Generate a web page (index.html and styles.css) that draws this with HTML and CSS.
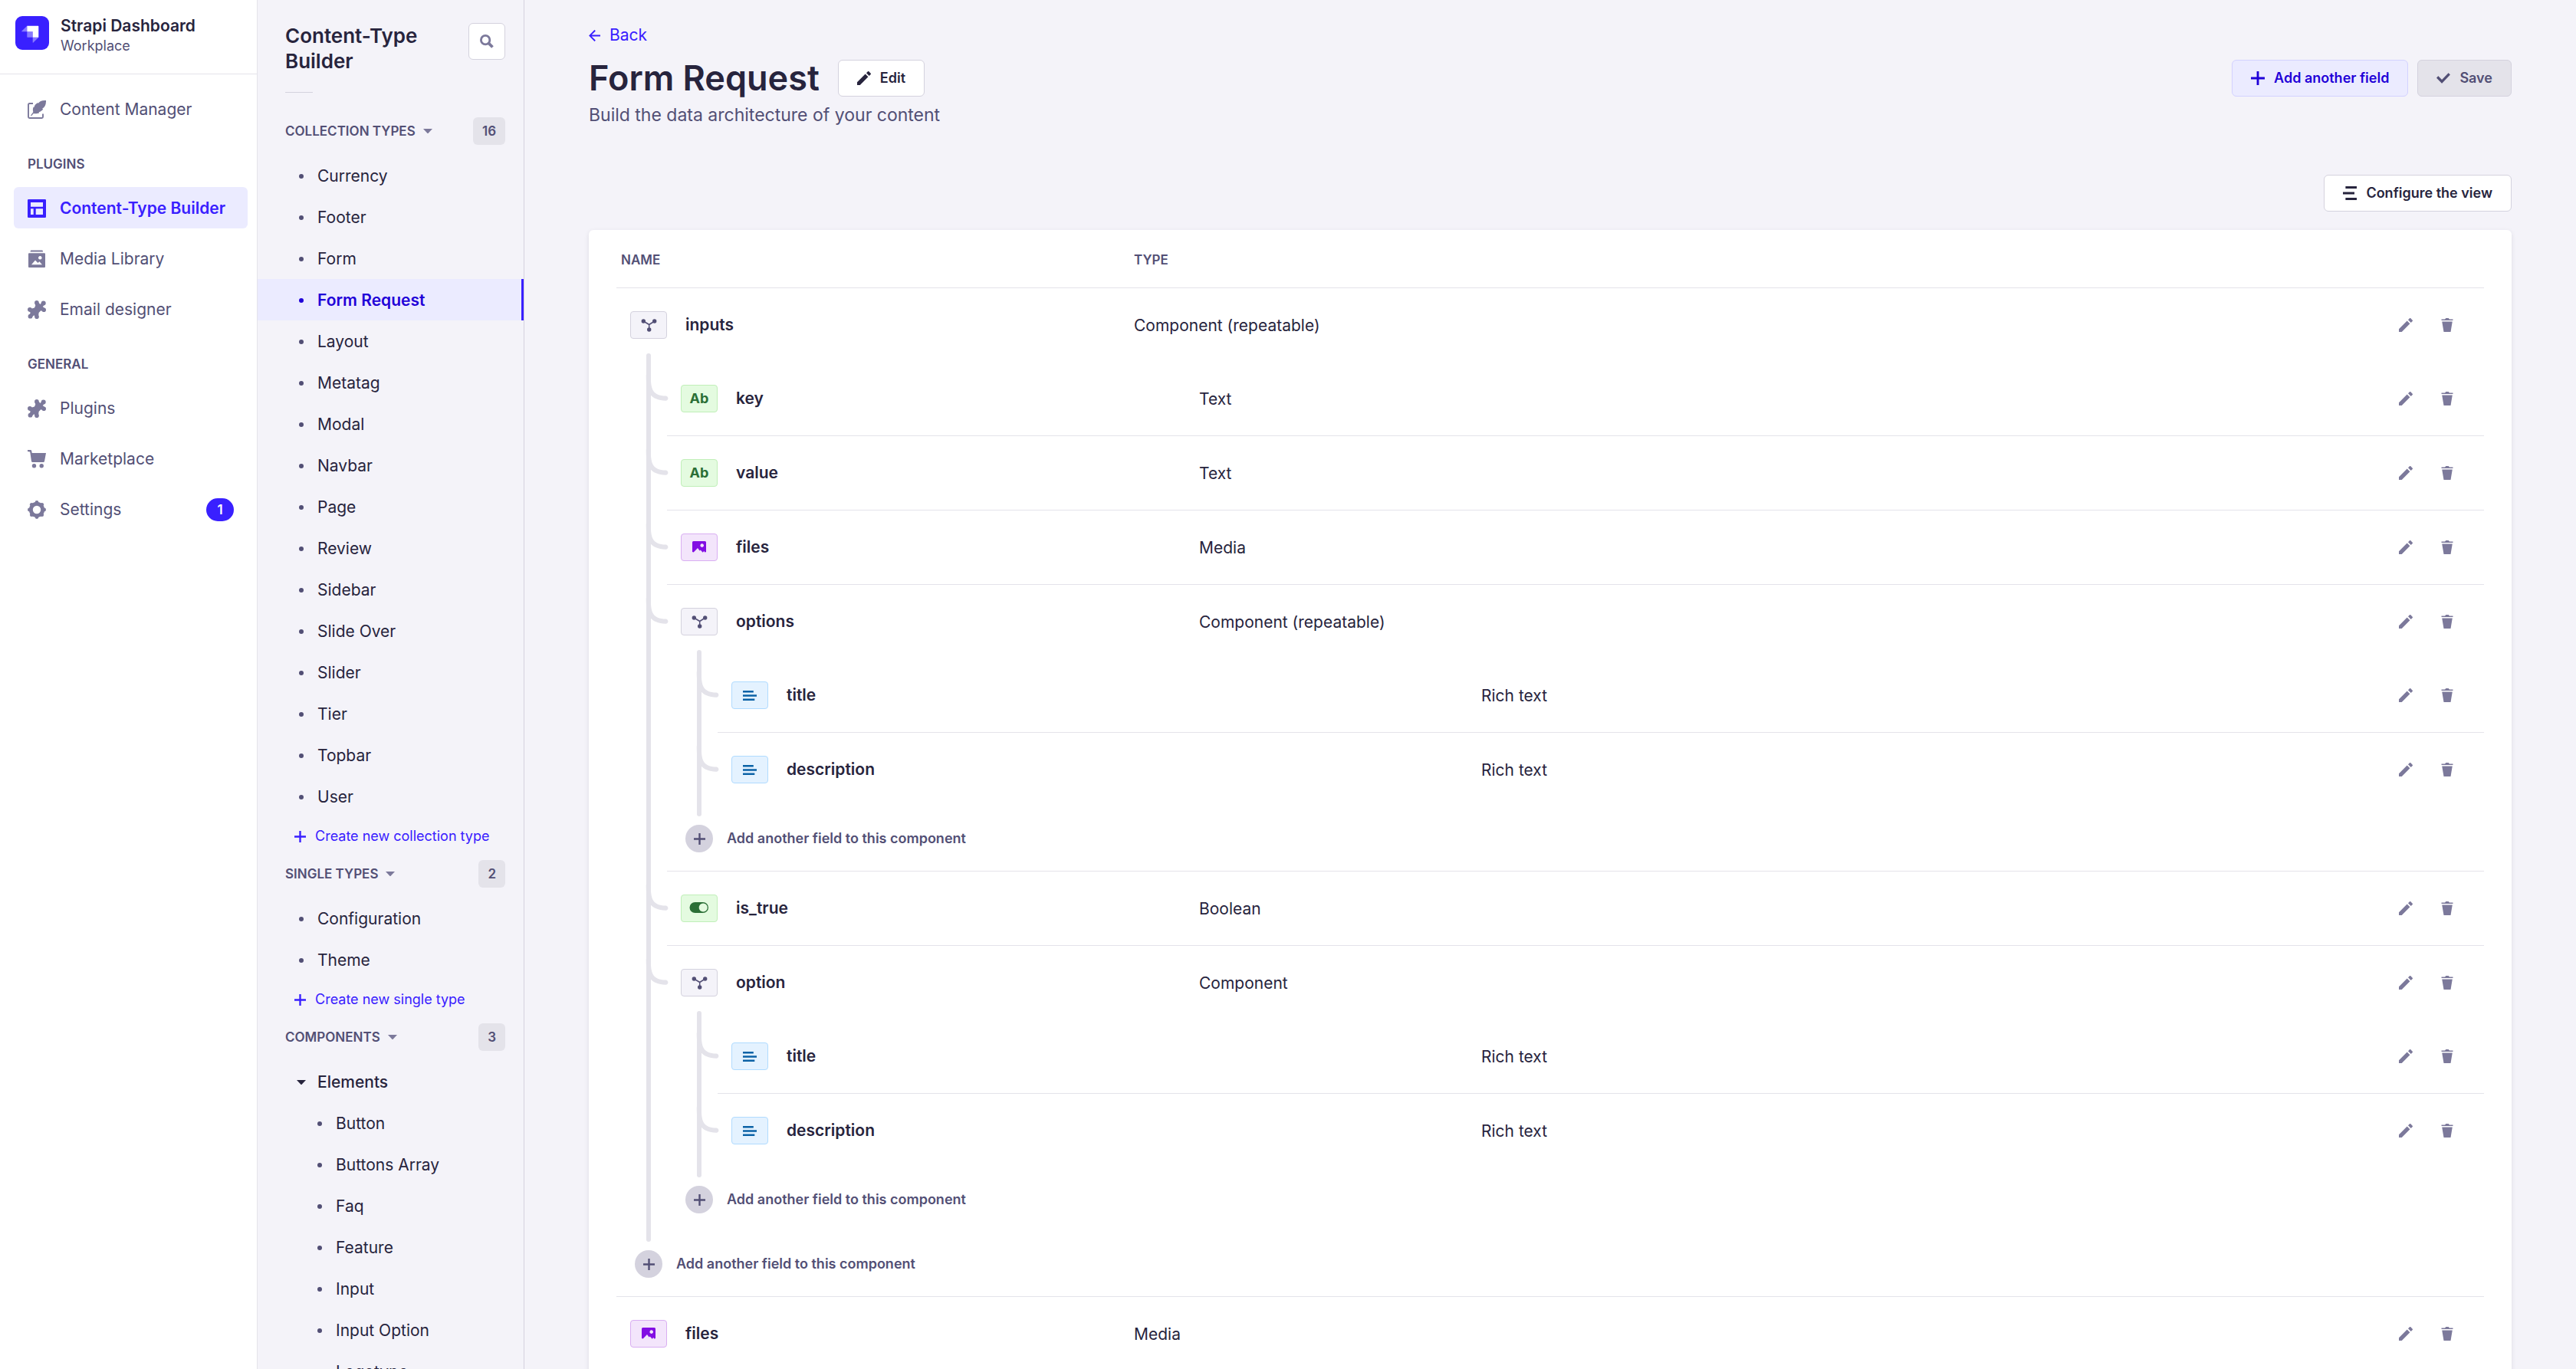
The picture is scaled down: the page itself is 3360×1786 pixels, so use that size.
FILE: index.html
```html
<!DOCTYPE html>
<html lang="en">
<head>
<meta charset="utf-8">
<title>Content-Type Builder</title>
<link rel="stylesheet" href="styles.css">
</head>
<body>
<svg class="sprite" aria-hidden="true">
  <symbol id="i-pencil" viewBox="0 0 24 24"><path fill-rule="evenodd" d="M23.604 3.514c.528.528.528 1.36 0 1.887l-2.622 2.607-4.99-4.99L18.6.396a1.322 1.322 0 0 1 1.887 0l3.118 3.118ZM0 24v-4.99l14.2-14.2 4.99 4.99L4.99 24H0Z"/></symbol>
  <symbol id="i-trash" viewBox="0 0 24 24"><path d="M3.236 6.149a.2.2 0 0 0-.197.233L6 24h12l2.96-17.618a.2.2 0 0 0-.196-.233H3.236ZM21.8 1.983c.11 0 .2.09.2.2v1.584a.2.2 0 0 1-.2.2H2.2a.2.2 0 0 1-.2-.2V2.183c0-.11.09-.2.2-.2h5.511c.9 0 1.631-1.09 1.631-1.983h5.316c0 .894.73 1.983 1.631 1.983H21.8Z"/></symbol>
  <symbol id="i-plus" viewBox="0 0 24 24"><path d="M24 13.604a.3.3 0 0 1-.3.3h-9.795V23.7a.3.3 0 0 1-.3.3h-3.21a.3.3 0 0 1-.3-.3v-9.795H.3a.3.3 0 0 1-.3-.3v-3.21a.3.3 0 0 1 .3-.3h9.795V.3a.3.3 0 0 1 .3-.3h3.21a.3.3 0 0 1 .3.3v9.795H23.7a.3.3 0 0 1 .3.3v3.21Z"/></symbol>
  <symbol id="i-check" viewBox="0 0 24 24"><path d="M20.727 2.97a.2.2 0 0 1 .286 0l2.85 2.89a.2.2 0 0 1 0 .28L9.554 20.854a.2.2 0 0 1-.285 0l-9.13-9.243a.2.2 0 0 1 0-.281l2.85-2.892a.2.2 0 0 1 .284 0l6.14 6.209L20.726 2.97Z"/></symbol>
  <symbol id="i-layer" viewBox="0 0 24 24"><path d="M4.5 0H24v4H4.500ZM0 10h20v4H0ZM4.500 20H24v4H4.500Z"/></symbol>
  <symbol id="i-back" viewBox="0 0 24 24"><path d="M24 13.3a.2.2 0 0 1-.2.2H5.74l8.239 8.239a.2.2 0 0 1 0 .282L12.14 23.86a.2.2 0 0 1-.282 0L.14 12.14a.2.2 0 0 1 0-.282L11.86.14a.2.2 0 0 1 .282 0L13.98 1.98a.2.2 0 0 1 0 .282L5.74 10.5H23.8c.11 0 .2.09.2.2v2.6Z"/></symbol>
  <symbol id="i-caret" viewBox="0 0 12 6"><path d="M0 0h12L6.600 5.700a.9.9 0 0 1-1.200 0Z"/></symbol>
  <symbol id="i-search" viewBox="0 0 24 24"><g fill="none" stroke="currentColor"><circle cx="9.500" cy="9.500" r="7.600" stroke-width="3.800"/><path d="M15.500 15.500 22 22" stroke-width="5"/></g></symbol>
  <symbol id="i-feather" viewBox="0 0 24 24"><path fill="none" stroke="currentColor" stroke-width="1.900" d="M7 4H2.500A1.500 1.500 0 0 0 1 5.500V21.500A1.500 1.500 0 0 0 2.500 23H18.500A1.500 1.500 0 0 0 20 21.500V17.500"/><path d="M24 .1C18.500-.3 15.500 1.500 14 3.800l-.6-.7C10.500 4.500 9 6.500 8.600 8.800l-.9-.4C6.500 11 6.800 13.300 7.300 15.200L4 19.600l1 .6 2.800-3.100c2 .4 5.300.2 7.400-.9l-.6-1c2.300-.5 4.400-1.900 5.600-3.700l-1.100-.8C22.700 9 24.200 4.800 24 .1Z"/></symbol>
  <symbol id="i-layout" viewBox="0 0 24 24"><path fill-rule="evenodd" d="M1.200 0h21.600A1.200 1.200 0 0 1 24 1.200v21.600a1.200 1.200 0 0 1-1.200 1.200H1.200A1.200 1.200 0 0 1 0 22.800V1.200A1.200 1.200 0 0 1 1.200 0ZM4 4v5.700h16V4ZM4 12.300V20h3.700v-7.700ZM10.700 12.300V20H20v-7.700Z"/></symbol>
  <symbol id="i-media" viewBox="0 0 24 24"><path fill-rule="evenodd" d="M4.200.4h15.200l.8 2H3.400ZM2 4.300h20a1 1 0 0 1 1 1V22a1 1 0 0 1-1 1H2a1 1 0 0 1-1-1V5.300a1 1 0 0 1 1-1ZM5 19.300h14l-3.600-4-2 1.600-3.400-3.500ZM16.300 8a2.300 2.300 0 1 0 .01 0Z"/></symbol>
  <symbol id="i-puzzle" viewBox="0 0 24 24"><path d="M9.500 3.500 14.200 2.500 16.500 5 19 2 22.500 5 19.800 8 22 10 20.500 14 17.200 13.200 14.600 16 14 21.500 10.500 22 8.300 19.300 5 22.500 1.500 20 3.800 16 1.500 13.500 3 9.500 5.800 10.500 9 9.500 10.200 6.800Z"/><circle cx="11.900" cy="2.900" r="2.800"/><circle cx="20.700" cy="3.400" r="3"/><circle cx="21.200" cy="12.200" r="2.800"/><circle cx="2.900" cy="11.800" r="2.900"/><circle cx="3.500" cy="20.700" r="2.900"/><circle cx="12" cy="21.200" r="2.800"/></symbol>
  <symbol id="i-cart" viewBox="0 0 24 24"><path d="M0 0h3.800a1.500 1.500 0 0 1 1.400 1.200l.5 2.700H24l-2 10.800a1.600 1.600 0 0 1-1.600 1.300H6.600A1.600 1.600 0 0 1 5 14.700L3.200 2.600 0 1.900Z"/><circle cx="8.500" cy="20.800" r="2.700"/><circle cx="18.200" cy="20.800" r="2.700"/></symbol>
  <symbol id="i-cog" viewBox="0 0 24 24"><circle cx="12" cy="12" r="7.700" fill="none" stroke="currentColor" stroke-width="5"/><circle cx="12" cy="2.400" r="2.400"/><circle cx="18.700" cy="5.300" r="2.400"/><circle cx="21.600" cy="12" r="2.400"/><circle cx="18.700" cy="18.700" r="2.400"/><circle cx="12" cy="21.600" r="2.400"/><circle cx="5.300" cy="18.700" r="2.400"/><circle cx="2.400" cy="12" r="2.400"/><circle cx="5.300" cy="5.300" r="2.400"/></symbol>
  <symbol id="i-component" viewBox="1 1 46 34"><path d="m17.300 13 7.400 4.500 7-4.500M24.700 17.500V24" fill="none" stroke="currentColor" stroke-width="1.500"/><circle cx="17.300" cy="13" r="2.700"/><circle cx="31.700" cy="13" r="2.700"/><circle cx="24.700" cy="24" r="2.700"/></symbol>
  <symbol id="i-picture" viewBox="1 1 46 34"><path fill-rule="evenodd" d="M16.500 10h15A1.500 1.500 0 0 1 33 11.500V23.800l-1.200 1-1.600-1.800-1.500 1.800-3-3.200-1 .8-2.700-3.300-5.300 5.500-1.700-.6V11.500A1.500 1.500 0 0 1 16.500 10ZM27.700 13.300a2.300 2.300 0 1 0 .01 0Z"/></symbol>
  <symbol id="i-rich" viewBox="1 1 46 34"><path d="M15 12h13.800v2.500H15ZM15 17.300h18v2.500H15ZM15 22.600h15.300v2.500H15Z"/></symbol>
  <symbol id="i-boolean" viewBox="1 1 46 34"><path fill-rule="evenodd" d="M18.500 10h10.500a7 7 0 0 1 0 14H18.500a7 7 0 0 1 0-14ZM29.200 11.500a5.500 5.500 0 1 0 .01 0Z"/></symbol>
  <symbol id="i-curve" viewBox="0 0 20 23"><path d="M7.025 14.751c1.634 2.308 4.580 3.855 10.535 4.135 1.124.053 2.038.958 2.038 2.083s-.914 2.043-2.038 1.995c-6.619-.284-11.106-2.026-13.805-5.838C.938 13.146.486 7.393.486.593H4.510c0 6.954.554 11.388 2.515 14.158Z"/></symbol>
</svg>

<div class="app">
  <nav class="nav" aria-label="Main">
    <div class="brand">
      <svg class="logo" viewBox="0 0 44 44" aria-hidden="true"><rect width="44" height="44" rx="9" fill="#3920ff"/><path fill="#fff" d="M15.300 12.700h14.500a.5.5 0 0 1 .5.5v14.500h-7.600v-7.500h-7.400Z"/><path fill="#fff" opacity=".4" d="M15.300 20.200h7.400v7.500h-7a.4.4 0 0 1-.4-.4ZM15.300 12.700v7.500H8.400c-.3 0-.4-.3-.2-.5ZM22.700 27.700h7.600l-7.100 7c-.2.200-.5.1-.5-.2Z"/></svg>
      <div><p class="brand-title">Strapi Dashboard</p><p class="brand-sub">Workplace</p></div>
    </div>
    <div class="nav-body">
      <a class="nav-link" href="#"><svg><use href="#i-feather"/></svg>Content Manager</a>
      <h2 class="nav-heading">PLUGINS</h2>
      <div class="nav-group">
        <a class="nav-link is-active" href="#"><svg><use href="#i-layout"/></svg>Content-Type Builder</a>
        <a class="nav-link" href="#"><svg><use href="#i-media"/></svg>Media Library</a>
        <a class="nav-link" href="#"><svg><use href="#i-puzzle"/></svg>Email designer</a>
      </div>
      <h2 class="nav-heading">GENERAL</h2>
      <div class="nav-group">
        <a class="nav-link" href="#"><svg><use href="#i-puzzle"/></svg>Plugins</a>
        <a class="nav-link" href="#"><svg><use href="#i-cart"/></svg>Marketplace</a>
        <a class="nav-link" href="#"><svg><use href="#i-cog"/></svg>Settings<span class="pill">1</span></a>
      </div>
    </div>
  </nav>

  <aside class="subnav" aria-label="Content types">
    <div class="subnav-head">
      <h2>Content-Type Builder</h2>
      <button class="search" type="button" aria-label="Search"><svg><use href="#i-search"/></svg></button>
    </div>
    <div class="short-rule"></div>

    <section>
      <div class="group-head"><button type="button">COLLECTION TYPES<svg><use href="#i-caret"/></svg></button><span class="count">16</span></div>
      <ul>
        <li><a href="#">Currency</a></li>
        <li><a href="#">Footer</a></li>
        <li><a href="#">Form</a></li>
        <li><a class="is-active" href="#">Form Request</a></li>
        <li><a href="#">Layout</a></li>
        <li><a href="#">Metatag</a></li>
        <li><a href="#">Modal</a></li>
        <li><a href="#">Navbar</a></li>
        <li><a href="#">Page</a></li>
        <li><a href="#">Review</a></li>
        <li><a href="#">Sidebar</a></li>
        <li><a href="#">Slide Over</a></li>
        <li><a href="#">Slider</a></li>
        <li><a href="#">Tier</a></li>
        <li><a href="#">Topbar</a></li>
        <li><a href="#">User</a></li>
      </ul>
      <button class="create" type="button"><svg><use href="#i-plus"/></svg>Create new collection type</button>
    </section>

    <section>
      <div class="group-head"><button type="button">SINGLE TYPES<svg><use href="#i-caret"/></svg></button><span class="count">2</span></div>
      <ul>
        <li><a href="#">Configuration</a></li>
        <li><a href="#">Theme</a></li>
      </ul>
      <button class="create" type="button"><svg><use href="#i-plus"/></svg>Create new single type</button>
    </section>

    <section>
      <div class="group-head"><button type="button">COMPONENTS<svg><use href="#i-caret"/></svg></button><span class="count">3</span></div>
      <button class="folder" type="button"><svg><use href="#i-caret"/></svg>Elements</button>
      <ul class="deep">
        <li><a href="#">Button</a></li>
        <li><a href="#">Buttons Array</a></li>
        <li><a href="#">Faq</a></li>
        <li><a href="#">Feature</a></li>
        <li><a href="#">Input</a></li>
        <li><a href="#">Input Option</a></li>
        <li><a href="#">Logotype</a></li>
      </ul>
    </section>
  </aside>

  <main class="main">
    <a class="back" href="#"><svg><use href="#i-back"/></svg>Back</a>
    <div class="title-row">
      <h1>Form Request</h1>
      <button class="btn" type="button"><svg><use href="#i-pencil"/></svg>Edit</button>
      <div class="title-actions">
        <button class="btn btn-soft" type="button"><svg><use href="#i-plus"/></svg>Add another field</button>
        <button class="btn btn-off" type="button" disabled><svg><use href="#i-check"/></svg>Save</button>
      </div>
    </div>
    <p class="subtitle">Build the data architecture of your content</p>
    <div class="toolbar"><button class="btn" type="button"><svg><use href="#i-layer"/></svg>Configure the view</button></div>

    <div class="card">
      <table class="fields">
        <colgroup><col class="col-name"><col><col class="col-actions"></colgroup>
        <thead><tr><th>NAME</th><th>TYPE</th><th></th></tr></thead>
        <tbody>
          <tr class="field">
            <td><div class="name"><span class="badge badge-gray"><svg><use href="#i-component"/></svg></span>inputs</div></td>
            <td>Component (repeatable)</td>
            <td><div class="actions"><button type="button" aria-label="Edit inputs"><svg><use href="#i-pencil"/></svg></button><button type="button" aria-label="Delete inputs"><svg><use href="#i-trash"/></svg></button></div></td>
          </tr>
          <tr class="nested"><td colspan="3"><div class="component">
            <table class="fields level-1">
              <colgroup><col class="col-name"><col><col class="col-actions"></colgroup>
              <tbody>
                <tr class="field">
                  <td><svg class="curve"><use href="#i-curve"/></svg><div class="name"><span class="badge badge-green">Ab</span>key</div></td>
                  <td>Text</td>
                  <td><div class="actions"><button type="button" aria-label="Edit key"><svg><use href="#i-pencil"/></svg></button><button type="button" aria-label="Delete key"><svg><use href="#i-trash"/></svg></button></div></td>
                </tr>
                <tr class="field">
                  <td><svg class="curve"><use href="#i-curve"/></svg><div class="name"><span class="badge badge-green">Ab</span>value</div></td>
                  <td>Text</td>
                  <td><div class="actions"><button type="button" aria-label="Edit value"><svg><use href="#i-pencil"/></svg></button><button type="button" aria-label="Delete value"><svg><use href="#i-trash"/></svg></button></div></td>
                </tr>
                <tr class="field">
                  <td><svg class="curve"><use href="#i-curve"/></svg><div class="name"><span class="badge badge-purple"><svg><use href="#i-picture"/></svg></span>files</div></td>
                  <td>Media</td>
                  <td><div class="actions"><button type="button" aria-label="Edit files"><svg><use href="#i-pencil"/></svg></button><button type="button" aria-label="Delete files"><svg><use href="#i-trash"/></svg></button></div></td>
                </tr>
                <tr class="field">
                  <td><svg class="curve"><use href="#i-curve"/></svg><div class="name"><span class="badge badge-gray"><svg><use href="#i-component"/></svg></span>options</div></td>
                  <td>Component (repeatable)</td>
                  <td><div class="actions"><button type="button" aria-label="Edit options"><svg><use href="#i-pencil"/></svg></button><button type="button" aria-label="Delete options"><svg><use href="#i-trash"/></svg></button></div></td>
                </tr>
                <tr class="nested"><td colspan="3"><div class="component">
                  <table class="fields level-2">
                    <colgroup><col class="col-name"><col><col class="col-actions"></colgroup>
                    <tbody>
                      <tr class="field">
                        <td><svg class="curve"><use href="#i-curve"/></svg><div class="name"><span class="badge badge-blue"><svg><use href="#i-rich"/></svg></span>title</div></td>
                        <td>Rich text</td>
                        <td><div class="actions"><button type="button" aria-label="Edit title"><svg><use href="#i-pencil"/></svg></button><button type="button" aria-label="Delete title"><svg><use href="#i-trash"/></svg></button></div></td>
                      </tr>
                      <tr class="field">
                        <td><svg class="curve"><use href="#i-curve"/></svg><div class="name"><span class="badge badge-blue"><svg><use href="#i-rich"/></svg></span>description</div></td>
                        <td>Rich text</td>
                        <td><div class="actions"><button type="button" aria-label="Edit description"><svg><use href="#i-pencil"/></svg></button><button type="button" aria-label="Delete description"><svg><use href="#i-trash"/></svg></button></div></td>
                      </tr>
                    </tbody>
                  </table>
                  <button class="add" type="button"><span><svg><use href="#i-plus"/></svg></span>Add another field to this component</button>
                </div></td></tr>
                <tr class="field">
                  <td><svg class="curve"><use href="#i-curve"/></svg><div class="name"><span class="badge badge-green"><svg><use href="#i-boolean"/></svg></span>is_true</div></td>
                  <td>Boolean</td>
                  <td><div class="actions"><button type="button" aria-label="Edit is_true"><svg><use href="#i-pencil"/></svg></button><button type="button" aria-label="Delete is_true"><svg><use href="#i-trash"/></svg></button></div></td>
                </tr>
                <tr class="field">
                  <td><svg class="curve"><use href="#i-curve"/></svg><div class="name"><span class="badge badge-gray"><svg><use href="#i-component"/></svg></span>option</div></td>
                  <td>Component</td>
                  <td><div class="actions"><button type="button" aria-label="Edit option"><svg><use href="#i-pencil"/></svg></button><button type="button" aria-label="Delete option"><svg><use href="#i-trash"/></svg></button></div></td>
                </tr>
                <tr class="nested"><td colspan="3"><div class="component">
                  <table class="fields level-2">
                    <colgroup><col class="col-name"><col><col class="col-actions"></colgroup>
                    <tbody>
                      <tr class="field">
                        <td><svg class="curve"><use href="#i-curve"/></svg><div class="name"><span class="badge badge-blue"><svg><use href="#i-rich"/></svg></span>title</div></td>
                        <td>Rich text</td>
                        <td><div class="actions"><button type="button" aria-label="Edit title"><svg><use href="#i-pencil"/></svg></button><button type="button" aria-label="Delete title"><svg><use href="#i-trash"/></svg></button></div></td>
                      </tr>
                      <tr class="field">
                        <td><svg class="curve"><use href="#i-curve"/></svg><div class="name"><span class="badge badge-blue"><svg><use href="#i-rich"/></svg></span>description</div></td>
                        <td>Rich text</td>
                        <td><div class="actions"><button type="button" aria-label="Edit description"><svg><use href="#i-pencil"/></svg></button><button type="button" aria-label="Delete description"><svg><use href="#i-trash"/></svg></button></div></td>
                      </tr>
                    </tbody>
                  </table>
                  <button class="add" type="button"><span><svg><use href="#i-plus"/></svg></span>Add another field to this component</button>
                </div></td></tr>
              </tbody>
            </table>
            <button class="add" type="button"><span><svg><use href="#i-plus"/></svg></span>Add another field to this component</button>
          </div></td></tr>
          <tr class="field">
            <td><div class="name"><span class="badge badge-purple"><svg><use href="#i-picture"/></svg></span>files</div></td>
            <td>Media</td>
            <td><div class="actions"><button type="button" aria-label="Edit files"><svg><use href="#i-pencil"/></svg></button><button type="button" aria-label="Delete files"><svg><use href="#i-trash"/></svg></button></div></td>
          </tr>
        </tbody>
      </table>
    </div>
  </main>
</div>
</body>
</html>
```
FILE: styles.css
```css
:root {
  --blue: #3920ff;
  --blue-dark: #1f00d8;
  --blue-soft: #ebebff;
  --ink: #27243d;
  --text: #524f75;
  --icon: #7c799b;
  --line: #e4e3ea;
  --line-strong: #d4d2de;
  --bg: #f4f3f9;
}

* { box-sizing: border-box; margin: 0; padding: 0; }

body {
  font-family: Inter, "Liberation Sans", sans-serif;
  font-size: 21px;
  line-height: 30px;
  color: var(--ink);
  background: var(--bg);
}

a { color: inherit; text-decoration: none; }
ul { list-style: none; }
button { font: inherit; color: inherit; background: none; border: 0; cursor: pointer; }
svg { display: block; flex: none; fill: currentColor; }
.sprite { position: absolute; width: 0; height: 0; }

.app { display: flex; height: 100vh; overflow: hidden; }

/* Main navigation */
.nav {
  flex: 0 0 336px;
  background: #fff;
  border-right: 1px solid var(--line);
}
.brand {
  display: flex;
  gap: 15px;
  padding: 21px 20px 23px;
  border-bottom: 1px solid var(--line);
  line-height: 26px;
}
.logo { width: 44px; height: 44px; }
.brand-title { font-weight: 600; }
.brand-sub { font-size: 18px; color: var(--text); }
.nav-body { padding: 18px 12px 0 18px; }
.nav-link {
  display: flex;
  align-items: center;
  gap: 18px;
  height: 54px;
  padding: 2px 18px 0;
  border-radius: 6px;
  color: var(--text);
}
.nav-link svg { width: 24px; height: 24px; color: var(--icon); }
.nav-link.is-active { background: var(--blue-soft); color: var(--blue); font-weight: 600; }
.nav-link.is-active svg { color: var(--blue); }
.nav-heading {
  padding: 33px 18px 18px;
  font-size: 17px;
  line-height: 24px;
  font-weight: 600;
  color: var(--text);
}
.nav-group { display: grid; gap: 12px; }
.pill {
  margin-left: auto;
  width: 36px;
  border-radius: 15px;
  background: var(--blue);
  color: #fff;
  font-size: 17px;
  font-weight: 600;
  text-align: center;
}

/* Content type list */
.subnav {
  flex: 0 0 348px;
  overflow: hidden;
  border-right: 1px solid var(--line-strong);
}
.subnav-head {
  display: flex;
  justify-content: space-between;
  align-items: flex-start;
  padding: 30px 24px 0 36px;
}
.subnav-head h2 { font-size: 26px; line-height: 33px; font-weight: 600; width: 200px; }
.search {
  display: grid;
  place-items: center;
  width: 48px;
  height: 48px;
  border: 1px solid var(--line-strong);
  border-radius: 6px;
  background: #fff;
  color: var(--icon);
}
.search svg { width: 18px; height: 18px; }
.short-rule { width: 36px; margin: 24px 0 32px 36px; border-top: 1px solid var(--line-strong); }
.group-head {
  display: flex;
  justify-content: space-between;
  align-items: center;
  padding: 0 24px 0 36px;
  margin-bottom: 13px;
  color: var(--text);
}
.group-head button {
  display: flex;
  align-items: center;
  gap: 10px;
  font-size: 17px;
  font-weight: 600;
}
.group-head svg, .folder svg { width: 12px; height: 6px; }
.group-head svg { color: var(--icon); }
.count {
  min-width: 34px;
  padding: 0 12px;
  border-radius: 6px;
  background: var(--line);
  font-size: 17px;
  line-height: 36px;
  font-weight: 600;
}
.subnav li a {
  display: flex;
  align-items: center;
  gap: 18px;
  height: 54px;
  padding: 2px 0 0 54px;
}
.subnav li a::before {
  content: "";
  width: 6px;
  height: 6px;
  border-radius: 50%;
  background: var(--text);
}
.subnav .deep li a { padding-left: 78px; }
.subnav li a.is-active {
  background: var(--blue-soft);
  border-right: 3px solid var(--blue);
  color: var(--blue-dark);
  font-weight: 600;
}
.subnav li a.is-active::before { background: var(--blue-dark); }
.create {
  display: flex;
  align-items: center;
  gap: 12px;
  margin: 13px 0 19px 48px;
  font-size: 18px;
  line-height: 24px;
  color: var(--blue);
}
.create svg { width: 15px; height: 15px; }
.folder {
  display: flex;
  align-items: center;
  gap: 15px;
  height: 54px;
  padding: 2px 0 0 51px;
  font-weight: 500;
}

/* Page */
.main { flex: 1; min-width: 0; overflow: hidden; padding: 34px 84px 0; }
.back {
  display: flex;
  align-items: center;
  gap: 12px;
  width: max-content;
  line-height: 24px;
  color: var(--blue);
}
.back svg { width: 15px; height: 15px; }
.title-row { display: flex; align-items: center; margin-top: 14px; }
h1 { font-size: 45px; line-height: 60px; font-weight: 600; margin-right: 24px; }
.title-actions { display: flex; gap: 12px; margin-left: auto; }
.btn {
  display: flex;
  align-items: center;
  gap: 12px;
  height: 48px;
  padding: 0 24px;
  border: 1px solid var(--line-strong);
  border-radius: 6px;
  background: #fff;
  font-size: 18px;
  font-weight: 600;
}
.btn svg { width: 18px; height: 18px; }
.btn-soft { background: var(--blue-soft); border-color: #d3d2ff; color: var(--blue-dark); }
.btn-off { background: var(--line); color: var(--text); cursor: default; }
.subtitle { font-size: 23px; line-height: 36px; color: var(--text); }
.toolbar { display: flex; justify-content: flex-end; margin: 60px 0 24px; }

/* Field table */
.card {
  padding: 0 36px 24px;
  border-radius: 6px;
  background: #fff;
  box-shadow: 0 2px 6px rgba(33, 33, 52, .1);
}
.fields { width: 100%; table-layout: fixed; border-collapse: separate; border-spacing: 0; }
.col-name { width: 675px; }
.level-1 .col-name { width: 694px; }
.level-2 .col-name { width: 996px; }
.col-actions { width: 144px; }
th {
  padding: 27px 0 24px;
  border-bottom: 1px solid var(--line);
  font-size: 17px;
  line-height: 24px;
  font-weight: 600;
  text-align: left;
  color: var(--text);
}
th:first-child { padding-left: 6px; }
.field > td { position: relative; padding: 24px 0; }
.field > td:nth-child(2) { padding: 26px 0 24px; }
.field + .field > td, .nested + .field > td { border-top: 1px solid var(--line); }
.name { display: flex; align-items: center; gap: 24px; padding-left: 18px; font-weight: 600; }
.badge {
  display: grid;
  place-items: center;
  width: 48px;
  height: 36px;
  border: 1px solid;
  border-radius: 4px;
  font-size: 18px;
  font-weight: 700;
}
.badge svg { width: 46px; height: 34px; }
.badge-gray { background: #f4f3f9; border-color: var(--line-strong); color: #524f75; }
.badge-green { background: #e4fbe0; border-color: #c0efb8; color: #2b6f36; }
.badge-purple { background: #f3e5fb; border-color: #d9aef2; color: #820ee3; }
.badge-blue { background: #e4f2ff; border-color: #b0dbff; color: #0b62a6; }
.actions { display: flex; justify-content: flex-end; gap: 6px; padding-right: 24px; }
.actions button {
  display: grid;
  place-items: center;
  width: 48px;
  height: 48px;
  color: var(--icon);
}
.actions svg { width: 18px; height: 18px; }

/* Nested component: stem, branch curves and the add button below */
.component { position: relative; }
.component > .fields { width: calc(100% - 66px); margin-left: 66px; }
.component::before {
  content: "";
  position: absolute;
  left: 39px;
  top: -11px;
  bottom: 71px;
  width: 6px;
  border-radius: 3px;
  background: var(--line);
}
.curve {
  position: absolute;
  left: -28px;
  top: 16px;
  width: 30px;
  height: 35px;
  color: var(--line);
}
.add {
  display: flex;
  align-items: center;
  gap: 18px;
  height: 84px;
  padding-left: 24px;
  font-size: 18px;
  font-weight: 600;
  color: var(--text);
}
.add span {
  display: grid;
  place-items: center;
  width: 36px;
  height: 36px;
  border-radius: 50%;
  background: var(--line-strong);
}
.add svg { width: 15px; height: 15px; }
```
